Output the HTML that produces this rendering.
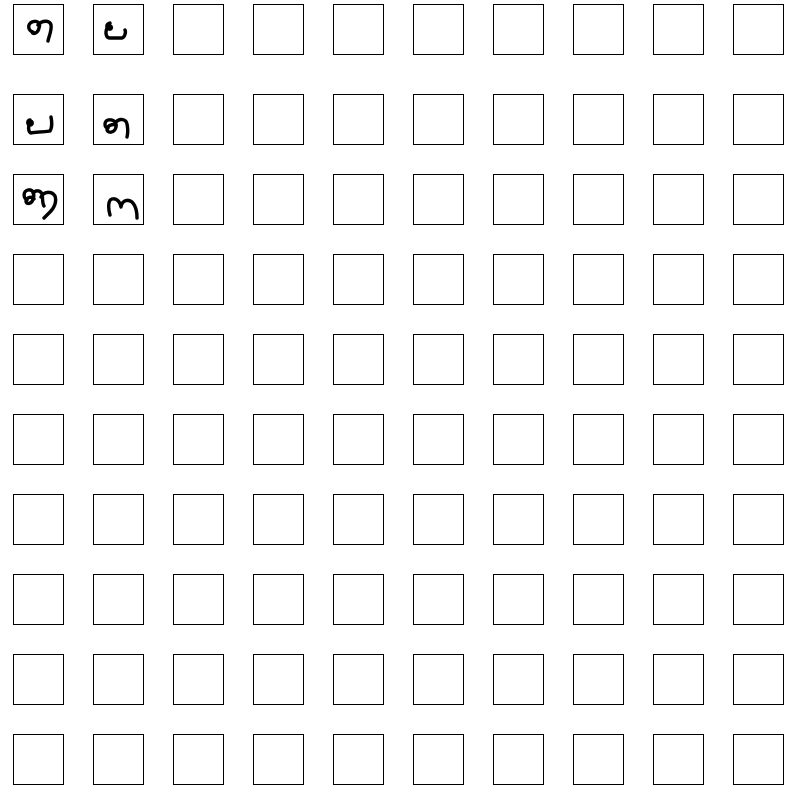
<!DOCTYPE html>
<html><head><style>html,body{margin:0;padding:0;background:#fff;width:788px;height:789px;overflow:hidden}
.b{position:absolute;width:49px;height:49px;border:1px solid #000;box-sizing:content-box}</style></head>
<body>
<svg width="788" height="789" xmlns="http://www.w3.org/2000/svg" style="position:absolute;left:0;top:0">
<g fill="none" stroke="#000" stroke-width="3.4" stroke-linecap="round" stroke-linejoin="round">
<path d="M33 32 C28 31 27 24 32 22 C37 20 41 23 39 28 C38 33 33 35 32 32 M38 25 C42 20 50 20 51 25 C52 30 49 36 48 41"/>
<path d="M110 23 C106 24 106 28 109 29 C112 30 112 26 110 26 L107 28 C105 33 106 38 110 38 L122 38 C125 37 126 32 125 30"/>
<path d="M30 120 C27 120 27 125 30 125 C33 125 33 121 30 121 C28 126 28 132 31 133 C36 132 44 132 50 131 C52 128 52 122 51 117"/>
<path d="M108 128 C104 128 104 121 108 120 C113 119 117 122 116 127 C115 133 107 134 107 129 C108 125 113 124 115 125 M116 122 C120 118 126 119 127 124 C128 129 128 133 127 137"/>
<path d="M27 200 C23 198 23 191 28 190 C33 189 35 194 33 199 C32 204 26 205 26 201 C27 197 32 196 34 199 M33 193 C36 190 40 190 42 194 C43 198 42 203 44 206 M41 197 C44 191 52 191 55 196 C57 202 54 208 50 212 C48 214 46 216 44 218"/>
<path d="M110 215 C108 208 108 200 112 199 C117 198 120 202 121 207 C122 200 128 199 132 202 C136 206 137 212 137 218"/>
</g>
</svg>
<div style="position:absolute;left:0;top:0;width:788px;height:789px">
<div class="b" style="left:13px;top:4px"></div><div class="b" style="left:93px;top:4px"></div><div class="b" style="left:173px;top:4px"></div><div class="b" style="left:253px;top:4px"></div><div class="b" style="left:333px;top:4px"></div><div class="b" style="left:413px;top:4px"></div><div class="b" style="left:493px;top:4px"></div><div class="b" style="left:573px;top:4px"></div><div class="b" style="left:653px;top:4px"></div><div class="b" style="left:733px;top:4px"></div>
<div class="b" style="left:13px;top:94px"></div><div class="b" style="left:93px;top:94px"></div><div class="b" style="left:173px;top:94px"></div><div class="b" style="left:253px;top:94px"></div><div class="b" style="left:333px;top:94px"></div><div class="b" style="left:413px;top:94px"></div><div class="b" style="left:493px;top:94px"></div><div class="b" style="left:573px;top:94px"></div><div class="b" style="left:653px;top:94px"></div><div class="b" style="left:733px;top:94px"></div>
<div class="b" style="left:13px;top:174px"></div><div class="b" style="left:93px;top:174px"></div><div class="b" style="left:173px;top:174px"></div><div class="b" style="left:253px;top:174px"></div><div class="b" style="left:333px;top:174px"></div><div class="b" style="left:413px;top:174px"></div><div class="b" style="left:493px;top:174px"></div><div class="b" style="left:573px;top:174px"></div><div class="b" style="left:653px;top:174px"></div><div class="b" style="left:733px;top:174px"></div>
<div class="b" style="left:13px;top:254px"></div><div class="b" style="left:93px;top:254px"></div><div class="b" style="left:173px;top:254px"></div><div class="b" style="left:253px;top:254px"></div><div class="b" style="left:333px;top:254px"></div><div class="b" style="left:413px;top:254px"></div><div class="b" style="left:493px;top:254px"></div><div class="b" style="left:573px;top:254px"></div><div class="b" style="left:653px;top:254px"></div><div class="b" style="left:733px;top:254px"></div>
<div class="b" style="left:13px;top:334px"></div><div class="b" style="left:93px;top:334px"></div><div class="b" style="left:173px;top:334px"></div><div class="b" style="left:253px;top:334px"></div><div class="b" style="left:333px;top:334px"></div><div class="b" style="left:413px;top:334px"></div><div class="b" style="left:493px;top:334px"></div><div class="b" style="left:573px;top:334px"></div><div class="b" style="left:653px;top:334px"></div><div class="b" style="left:733px;top:334px"></div>
<div class="b" style="left:13px;top:414px"></div><div class="b" style="left:93px;top:414px"></div><div class="b" style="left:173px;top:414px"></div><div class="b" style="left:253px;top:414px"></div><div class="b" style="left:333px;top:414px"></div><div class="b" style="left:413px;top:414px"></div><div class="b" style="left:493px;top:414px"></div><div class="b" style="left:573px;top:414px"></div><div class="b" style="left:653px;top:414px"></div><div class="b" style="left:733px;top:414px"></div>
<div class="b" style="left:13px;top:494px"></div><div class="b" style="left:93px;top:494px"></div><div class="b" style="left:173px;top:494px"></div><div class="b" style="left:253px;top:494px"></div><div class="b" style="left:333px;top:494px"></div><div class="b" style="left:413px;top:494px"></div><div class="b" style="left:493px;top:494px"></div><div class="b" style="left:573px;top:494px"></div><div class="b" style="left:653px;top:494px"></div><div class="b" style="left:733px;top:494px"></div>
<div class="b" style="left:13px;top:574px"></div><div class="b" style="left:93px;top:574px"></div><div class="b" style="left:173px;top:574px"></div><div class="b" style="left:253px;top:574px"></div><div class="b" style="left:333px;top:574px"></div><div class="b" style="left:413px;top:574px"></div><div class="b" style="left:493px;top:574px"></div><div class="b" style="left:573px;top:574px"></div><div class="b" style="left:653px;top:574px"></div><div class="b" style="left:733px;top:574px"></div>
<div class="b" style="left:13px;top:654px"></div><div class="b" style="left:93px;top:654px"></div><div class="b" style="left:173px;top:654px"></div><div class="b" style="left:253px;top:654px"></div><div class="b" style="left:333px;top:654px"></div><div class="b" style="left:413px;top:654px"></div><div class="b" style="left:493px;top:654px"></div><div class="b" style="left:573px;top:654px"></div><div class="b" style="left:653px;top:654px"></div><div class="b" style="left:733px;top:654px"></div>
<div class="b" style="left:13px;top:734px"></div><div class="b" style="left:93px;top:734px"></div><div class="b" style="left:173px;top:734px"></div><div class="b" style="left:253px;top:734px"></div><div class="b" style="left:333px;top:734px"></div><div class="b" style="left:413px;top:734px"></div><div class="b" style="left:493px;top:734px"></div><div class="b" style="left:573px;top:734px"></div><div class="b" style="left:653px;top:734px"></div><div class="b" style="left:733px;top:734px"></div>
</div>
</body></html>
